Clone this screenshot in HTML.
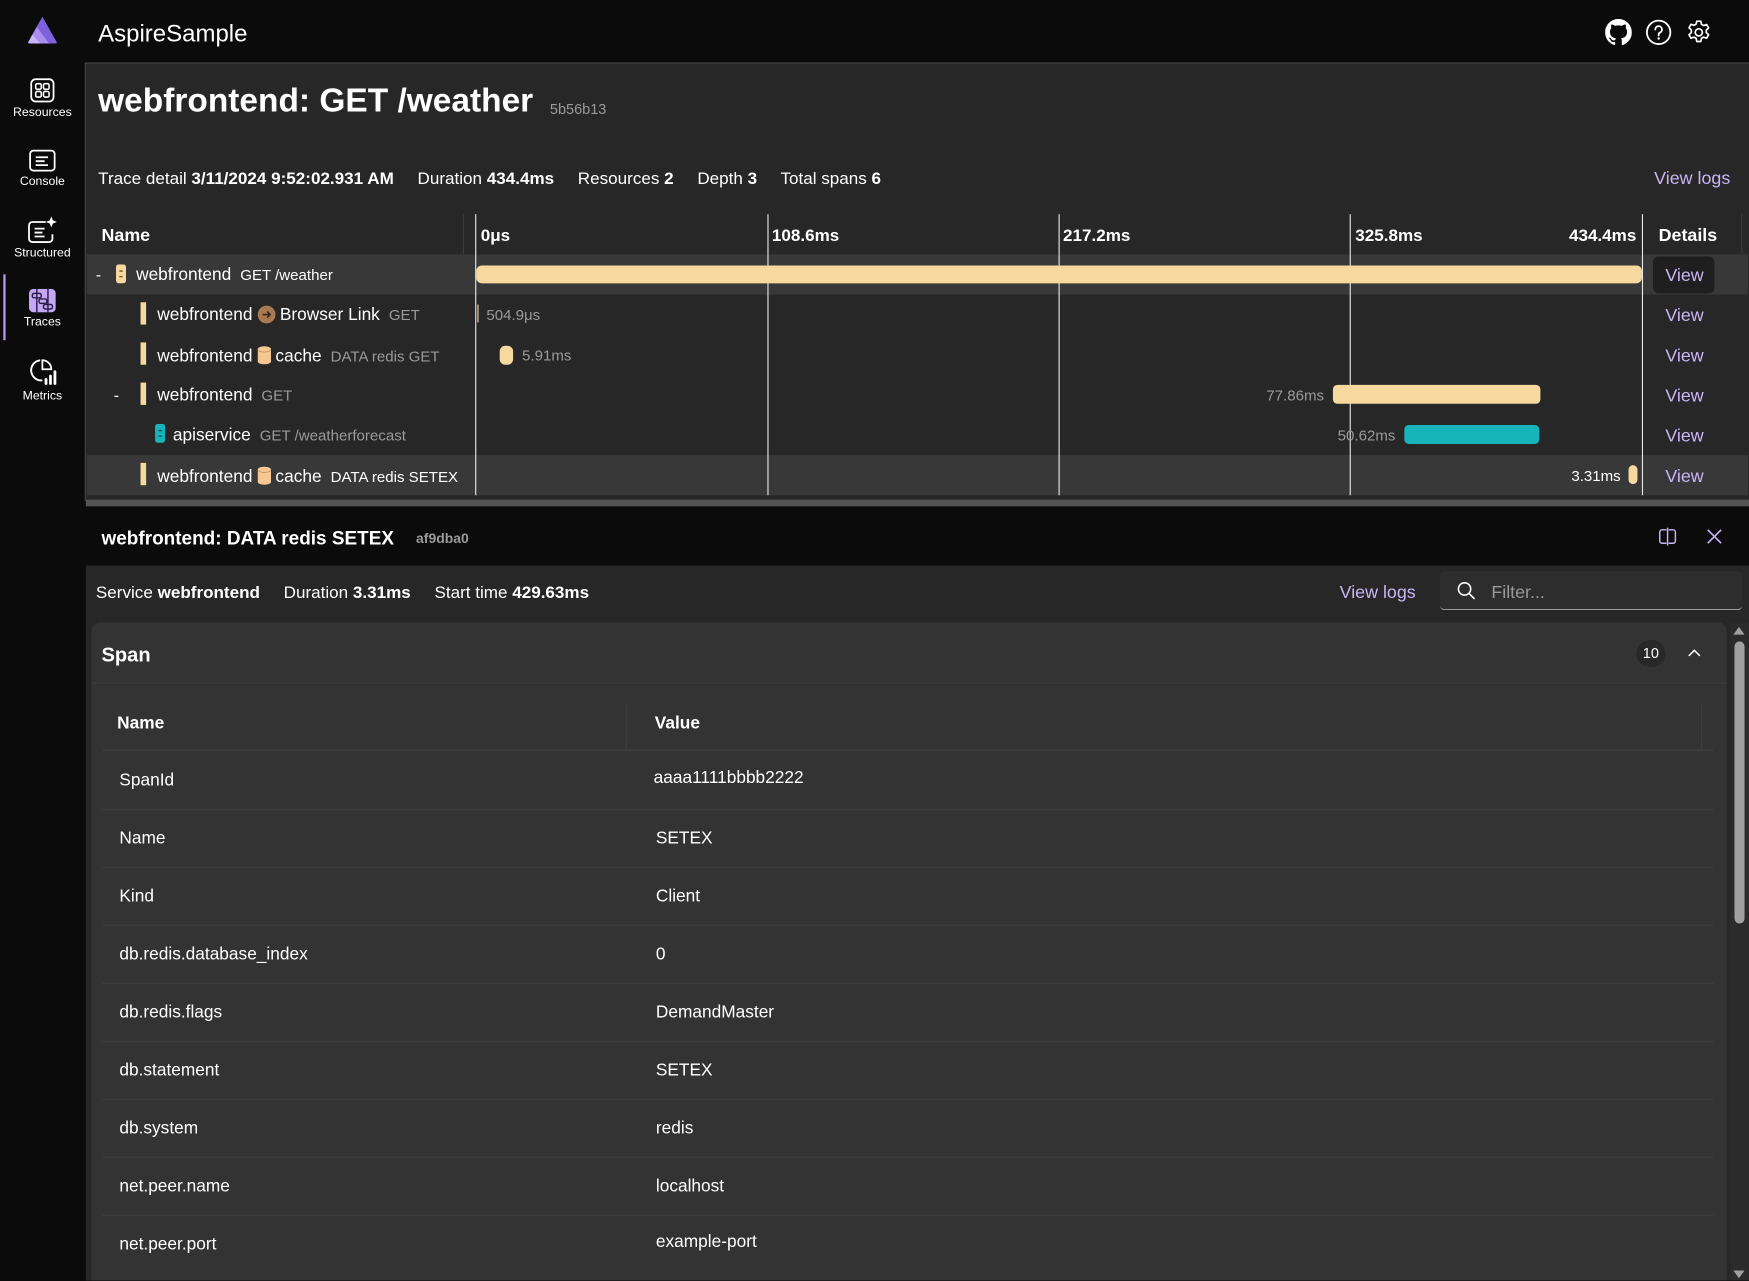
<!DOCTYPE html>
<html><head><meta charset="utf-8">
<style>
html,body{margin:0;padding:0;background:#0b0b0b;overflow:hidden;width:1749px;height:1280px}
#w{position:absolute;left:0;top:0;width:1568px;height:1148px;transform:scale(1.11543);transform-origin:0 0;font-family:"Liberation Sans",Arial,sans-serif;color:#fff;background:#0b0b0b;overflow:hidden}
.a{position:absolute;white-space:nowrap}
.g{color:#9a9a9a}
.lk{color:#c9b6f7}
.nav{position:absolute;left:0;width:76px;text-align:center;font-size:11px;color:#fff}
.nav svg{display:block;margin:0 auto 3px}
.vl{position:absolute;top:192px;width:1px;height:252px;background:#e8e8e8}
.row{position:absolute;left:78px;width:1489px;height:36px}
.bar{position:absolute;height:16px;border-radius:4px;background:#f7d9a0}
.view{position:absolute;left:1493px;font-size:16px;color:#c9b6f7}
.tr{position:absolute;left:92px;width:1444px;height:52px;border-bottom:1px solid #3e3e3e}
.tr span{position:absolute;top:18px;font-size:15.5px}
</style></head><body><div id="w">
<svg class="a" style="left:24px;top:14px" width="28" height="26" viewBox="0 0 28 26"><path d="M14 1 L27 24 Q27 25 25 25 L3 25 Q1 25 1 24 Z" fill="#7d62dc"/><path d="M9 10 L20 25 H3 Q1 25 2 23 Z" fill="#a98ef0"/><path d="M5 17 L12 25 H3 Q1 25 2 23 Z" fill="#c9b5f8"/></svg>
<div class="a" style="left:88px;top:18px;font-size:21.5px">AspireSample</div>
<svg class="a" style="left:1439px;top:17px" width="24" height="24" viewBox="0 0 16 16"><path fill="#fff" d="M8 0C3.58 0 0 3.580 0 8c0 3.54 2.29 6.53 5.47 7.590.4.07.55-.17.55-.38 0-.19-.01-.82-.01-1.49-2.010.37-2.53-.49-2.69-.94-.09-.23-.48-.94-.82-1.13-.28-.15-.68-.52-.01-.53.63-.01 1.080.58 1.230.82.72 1.21 1.870.87 2.330.66.07-.52.28-.87.51-1.07-1.78-.2-3.64-.89-3.64-3.95 0-.87.31-1.59.82-2.15-.08-.2-.36-1.020.08-2.12 0 0 .67-.21 2.2.82.64-.18 1.32-.27 2-.27s1.360.09 2 .27c1.53-1.04 2.2-.82 2.2-.82.44 1.1.16 1.920.08 2.12.51.56.82 1.270.82 2.15 0 3.07-1.87 3.75-3.65 3.950.29.25.54.73.54 1.48 0 1.07-.01 1.93-.01 2.2 0 .21.15.46.55.38A8.010 8.010 0 0016 8c0-4.42-3.58-8-8-8z"/></svg>
<svg class="a" style="left:1475px;top:17px" width="24" height="24" viewBox="0 0 24 24"><circle cx="12" cy="12" r="10.5" fill="none" stroke="#fff" stroke-width="1.6"/><path d="M9 9.5a3 3 0 1 1 4.2 2.7c-.8.4-1.2 1-1.2 1.8v.8" fill="none" stroke="#fff" stroke-width="1.6" stroke-linecap="round"/><circle cx="12" cy="17.5" r="1.1" fill="#fff"/></svg>
<svg class="a" style="left:1511px;top:17px" width="24" height="24" viewBox="0 0 24 24"><path d="M10.2 2h3.6l.6 2.8 1.9 1.1 2.7-.9 1.8 3.1-2.1 1.9v2.2l2.1 1.9-1.8 3.1-2.7-.9-1.9 1.1-.6 2.8h-3.6l-.6-2.8-1.9-1.1-2.7.9-1.8-3.1 2.1-1.9V9.8L3.2 7.9 5 4.8l2.7.9 1.9-1.1z" fill="none" stroke="#fff" stroke-width="1.5" stroke-linejoin="round"/><circle cx="12" cy="12" r="3.2" fill="none" stroke="#fff" stroke-width="1.5"/></svg>
<div class="nav" style="top:70px"><svg width="22" height="22" viewBox="0 0 22 22"><rect x="1" y="1" width="20" height="20" rx="4" fill="none" stroke="#fff" stroke-width="1.6"/><rect x="5" y="5" width="5" height="5" rx="1.3" fill="none" stroke="#fff" stroke-width="1.4"/><rect x="12" y="5" width="5" height="5" rx="1.3" fill="none" stroke="#fff" stroke-width="1.4"/><rect x="5" y="12" width="5" height="5" rx="1.3" fill="none" stroke="#fff" stroke-width="1.4"/><rect x="12" y="12" width="5" height="5" rx="1.3" fill="none" stroke="#fff" stroke-width="1.4"/></svg>Resources</div>
<div class="nav" style="top:134px"><svg width="24" height="20" viewBox="0 0 24 20"><rect x="1" y="1" width="22" height="18" rx="3" fill="none" stroke="#fff" stroke-width="1.6"/><path d="M6 7h11M6 10.5h8M6 14h11" stroke="#fff" stroke-width="1.6"/></svg>Console</div>
<div class="nav" style="top:194px"><svg width="26" height="24" viewBox="0 0 26 24"><path d="M16 5H4a3 3 0 0 0-3 3v12a3 3 0 0 0 3 3h15a3 3 0 0 0 3-3v-4" fill="none" stroke="#fff" stroke-width="1.6"/><path d="M6 11h9M6 14.5h7M6 18h9" stroke="#fff" stroke-width="1.6"/><path d="M21 0l1.4 3.6L26 5l-3.6 1.4L21 10l-1.4-3.6L16 5l3.6-1.4z" fill="#fff"/></svg>Structured</div>
<div class="a" style="left:3px;top:246px;width:2px;height:59px;background:#b89df2"></div>
<div class="nav" style="top:259px"><svg width="24" height="21" viewBox="0 0 24 21"><rect x="0" y="0" width="24" height="21" rx="4" fill="#c5a8f4"/><rect x="3" y="4" width="8" height="4" rx="1.5" fill="none" stroke="#2a1d4a" stroke-width="1.3"/><rect x="9" y="9" width="7" height="4" rx="1.5" fill="none" stroke="#2a1d4a" stroke-width="1.3"/><rect x="13" y="14" width="8" height="4" rx="1.5" fill="none" stroke="#2a1d4a" stroke-width="1.3"/><path d="M7 0v21M17 0v21" stroke="#2a1d4a" stroke-width="1.3"/></svg>Traces</div>
<div class="nav" style="top:320px"><svg width="26" height="26" viewBox="0 0 26 26"><path d="M11 3a9 9 0 1 0 2 18" fill="none" stroke="#fff" stroke-width="1.7"/><path d="M13 3v8h8a8 8 0 0 0-8-8z" fill="none" stroke="#fff" stroke-width="1.6"/><rect x="15" y="19" width="2.5" height="6" rx="1" fill="#fff"/><rect x="19" y="16" width="2.5" height="9" rx="1" fill="#fff"/><rect x="23" y="12" width="2.5" height="13" rx="1" fill="#fff"/></svg>Metrics</div>
<div class="a" style="left:76px;top:56px;width:1492px;height:392px;background:#272727;border-top:1px solid #444;border-left:1px solid #444"></div>
<div class="a" style="left:88px;top:74px;font-size:30px;font-weight:bold">webfrontend: GET /weather</div>
<div class="a g" style="left:493px;top:90px;font-size:13px">5b56b13</div>
<div class="a" style="left:88px;top:152px;font-size:15.3px">Trace detail <b>3/11/2024 9:52:02.931 AM</b>&nbsp;&nbsp;&nbsp;&nbsp; Duration <b>434.4ms</b>&nbsp;&nbsp;&nbsp;&nbsp; Resources <b>2</b>&nbsp;&nbsp;&nbsp;&nbsp; Depth <b>3</b>&nbsp;&nbsp;&nbsp;&nbsp; Total spans <b>6</b></div>
<div class="a lk" style="left:1483px;top:152px;font-size:16px">View logs</div>
<div class="a" style="left:91px;top:203px;font-size:16px;font-weight:bold">Name</div>
<div class="a" style="left:415px;top:192px;width:1px;height:36px;background:#3a3a3a"></div>
<div class="a" style="left:431px;top:203px;font-size:15.3px;font-weight:bold">0μs</div>
<div class="a" style="left:692px;top:203px;font-size:15.3px;font-weight:bold">108.6ms</div>
<div class="a" style="left:953px;top:203px;font-size:15.3px;font-weight:bold">217.2ms</div>
<div class="a" style="left:1215px;top:203px;font-size:15.3px;font-weight:bold">325.8ms</div>
<div class="a" style="left:1380px;top:203px;width:87px;text-align:right;font-size:15.3px;font-weight:bold">434.4ms</div>
<div class="a" style="left:1487px;top:203px;font-size:16px;font-weight:bold">Details</div>
<div class="a" style="left:1561px;top:192px;width:1px;height:36px;background:#3a3a3a"></div>
<div class="row" style="top:228px;background:#383838"></div>
<div class="row" style="top:408px;background:#383838"></div>
<div class="a" style="left:1482px;top:230px;width:55px;height:33px;background:#1f1f1f;border-radius:5px"></div>
<div class="vl" style="left:426px"></div><div class="vl" style="left:688px"></div><div class="vl" style="left:949px"></div><div class="vl" style="left:1210px"></div><div class="vl" style="left:1472px"></div>

<div class="a" style="left:86px;top:238px;font-size:14px">-</div>
<svg class="a" style="left:104px;top:237px" width="9" height="17" viewBox="0 0 9 17"><rect width="9" height="17" rx="2.5" fill="#f7d9a0"/><path d="M3 6h3M3 11h3" stroke="#6b5630" stroke-width="1.2"/></svg>
<div class="a" style="left:122px;top:238px;font-size:15.5px">webfrontend <span style="font-size:13.5px">&nbsp;GET /weather</span></div>
<div class="bar" style="left:427px;top:238px;width:1045px;height:16px;border-radius:5px"></div>
<div class="view" style="top:239px">View</div>

<div class="a" style="left:126px;top:271px;width:5px;height:20px;background:#f7d9a0"></div>
<div class="a" style="left:141px;top:274px;font-size:15.5px">webfrontend <svg style="vertical-align:-3px" width="16" height="16" viewBox="0 0 16 16"><circle cx="8" cy="8" r="8" fill="#a87a52"/><path d="M4.5 8h6.5M8.5 5.2L11.2 8 8.5 10.8" fill="none" stroke="#3a2516" stroke-width="1.4"/></svg> Browser Link <span class="g" style="font-size:13.5px">&nbsp;GET</span></div>
<div class="a" style="left:428px;top:273px;width:1px;height:16px;background:#f7d9a0"></div>
<div class="a g" style="left:436px;top:275px;font-size:13.5px">504.9μs</div>
<div class="view" style="top:275px">View</div>

<div class="a" style="left:126px;top:307px;width:5px;height:20px;background:#f7d9a0"></div>
<div class="a" style="left:141px;top:310px;font-size:15.5px">webfrontend <svg style="vertical-align:-3px" width="12" height="17" viewBox="0 0 12 17"><path d="M0 3a6 2.6 0 0 1 12 0v11a6 2.6 0 0 1-12 0z" fill="#f7c792"/><path d="M0 3a6 2.6 0 0 0 12 0" fill="none" stroke="#c9935c" stroke-width="0.8"/></svg> cache <span class="g" style="font-size:13.5px">&nbsp;DATA redis GET</span></div>
<div class="bar" style="left:448px;top:310px;width:12px;height:17px;border-radius:5px"></div>
<div class="a g" style="left:468px;top:311px;font-size:13.5px">5.91ms</div>
<div class="view" style="top:311px">View</div>

<div class="a" style="left:102px;top:346px;font-size:14px">-</div>
<div class="a" style="left:126px;top:343px;width:5px;height:20px;background:#f7d9a0"></div>
<div class="a" style="left:141px;top:346px;font-size:15.5px">webfrontend <span class="g" style="font-size:13.5px">&nbsp;GET</span></div>
<div class="a g" style="left:1100px;top:347px;width:87px;text-align:right;font-size:13.5px">77.86ms</div>
<div class="bar" style="left:1195px;top:345px;width:186px;height:17px"></div>
<div class="view" style="top:347px">View</div>

<svg class="a" style="left:139px;top:380px" width="9" height="17" viewBox="0 0 9 17"><rect width="9" height="17" rx="2.5" fill="#17b5bb"/><path d="M3 6h3M3 11h3" stroke="#0a4a4d" stroke-width="1.2"/></svg>
<div class="a" style="left:155px;top:382px;font-size:15.5px">apiservice <span class="g" style="font-size:13.5px">&nbsp;GET /weatherforecast</span></div>
<div class="a g" style="left:1164px;top:383px;width:87px;text-align:right;font-size:13.5px">50.62ms</div>
<div class="bar" style="left:1259px;top:381px;width:121px;height:17px;background:#17b5bb"></div>
<div class="view" style="top:383px">View</div>

<div class="a" style="left:126px;top:415px;width:5px;height:20px;background:#f7d9a0"></div>
<div class="a" style="left:141px;top:418px;font-size:15.5px">webfrontend <svg style="vertical-align:-3px" width="12" height="17" viewBox="0 0 12 17"><path d="M0 3a6 2.6 0 0 1 12 0v11a6 2.6 0 0 1-12 0z" fill="#f7c792"/><path d="M0 3a6 2.6 0 0 0 12 0" fill="none" stroke="#c9935c" stroke-width="0.8"/></svg> cache <span style="font-size:13.5px">&nbsp;DATA redis SETEX</span></div>
<div class="a" style="left:1366px;top:419px;width:87px;text-align:right;font-size:13.5px">3.31ms</div>
<div class="bar" style="left:1460px;top:417px;width:8px;height:17px;border-radius:4px"></div>
<div class="view" style="top:419px">View</div>

<div class="a" style="left:77px;top:448px;width:1491px;height:6px;background:#555"></div>
<div class="a" style="left:77px;top:454px;width:1491px;height:53px;background:#0b0b0b"></div>
<div class="a" style="left:91px;top:473px;font-size:17px;font-weight:bold">webfrontend: DATA redis SETEX</div>
<div class="a g" style="left:373px;top:476px;font-size:12.5px;font-weight:bold">af9dba0</div>
<svg class="a" style="left:1487px;top:473px" width="16" height="16" viewBox="0 0 16 16"><path d="M7 2H3a2 2 0 0 0-2 2v8a2 2 0 0 0 2 2h4M9 2h4a2 2 0 0 1 2 2v8a2 2 0 0 1-2 2H9M8 0v16" fill="none" stroke="#c9b6f7" stroke-width="1.3"/></svg>
<svg class="a" style="left:1530px;top:474px" width="14" height="14" viewBox="0 0 14 14"><path d="M1 1l12 12M13 1L1 13" stroke="#c9b6f7" stroke-width="1.4"/></svg>
<div class="a" style="left:77px;top:507px;width:1491px;height:641px;background:#272727"></div>
<div class="a" style="left:86px;top:523px;font-size:15.3px">Service <b>webfrontend</b>&nbsp;&nbsp;&nbsp;&nbsp; Duration <b>3.31ms</b>&nbsp;&nbsp;&nbsp;&nbsp; Start time <b>429.63ms</b></div>
<div class="a lk" style="left:1201px;top:523px;font-size:16px">View logs</div>
<div class="a" style="left:1291px;top:512px;width:271px;height:34px;background:#2d2d2d;border-radius:4px;border-bottom:1px solid #999"></div>
<svg class="a" style="left:1306px;top:521px" width="17" height="17" viewBox="0 0 17 17"><circle cx="7" cy="7" r="5.5" fill="none" stroke="#fff" stroke-width="1.4"/><path d="M11 11l5 5" stroke="#fff" stroke-width="1.4"/></svg>
<div class="a g" style="left:1337px;top:523px;font-size:16px">Filter...</div>
<div class="a" style="left:82px;top:558px;width:1466px;height:640px;background:#333;border-radius:8px"></div>
<div class="a" style="left:91px;top:577px;font-size:18px;font-weight:bold">Span</div>
<div class="a" style="left:1467px;top:574px;width:26px;height:24px;border-radius:12px;background:#282828;font-size:13px;text-align:center;line-height:24px">10</div>
<svg class="a" style="left:1513px;top:581px" width="12" height="8" viewBox="0 0 12 8"><path d="M1 7l5-5 5 5" fill="none" stroke="#fff" stroke-width="1.4"/></svg>
<div class="a" style="left:82px;top:612px;width:1466px;height:1px;background:#3b3b3b"></div>
<div class="a" style="left:105px;top:640px;font-size:15.5px;font-weight:bold">Name</div>
<div class="a" style="left:561px;top:631px;width:1px;height:40px;background:#3e3e3e"></div>
<div class="a" style="left:587px;top:640px;font-size:15.5px;font-weight:bold">Value</div>
<div class="a" style="left:1525px;top:631px;width:1px;height:40px;background:#3e3e3e"></div>
<div class="a" style="left:92px;top:672px;width:1444px;height:1px;background:#444"></div>
<div class="tr" style="top:673px"><span style="left:15px">SpanId</span><span style="left:494px;top:16px">aaaa1111bbbb2222</span></div>
<div class="tr" style="top:725px"><span style="left:15px">Name</span><span style="left:496px">SETEX</span></div>
<div class="tr" style="top:777px"><span style="left:15px">Kind</span><span style="left:496px">Client</span></div>
<div class="tr" style="top:829px"><span style="left:15px">db.redis.database_index</span><span style="left:496px">0</span></div>
<div class="tr" style="top:881px"><span style="left:15px">db.redis.flags</span><span style="left:496px">DemandMaster</span></div>
<div class="tr" style="top:933px"><span style="left:15px">db.statement</span><span style="left:496px">SETEX</span></div>
<div class="tr" style="top:985px"><span style="left:15px">db.system</span><span style="left:496px">redis</span></div>
<div class="tr" style="top:1037px"><span style="left:15px">net.peer.name</span><span style="left:496px">localhost</span></div>
<div class="tr" style="top:1089px;border:none"><span style="left:15px">net.peer.port</span><span style="left:496px;top:16px">example-port</span></div>
<div class="a" style="left:1551px;top:558px;width:17px;height:590px;background:#2b2b2b"></div>
<svg class="a" style="left:1553px;top:561px" width="12" height="9" viewBox="0 0 12 9"><path d="M6 1l5 7H1z" fill="#a0a0a0"/></svg>
<div class="a" style="left:1555px;top:575px;width:9px;height:253px;background:#a0a0a0;border-radius:5px"></div>
<svg class="a" style="left:1553px;top:1138px" width="12" height="9" viewBox="0 0 12 9"><path d="M6 8l5-7H1z" fill="#a0a0a0"/></svg>
</div></body></html>
